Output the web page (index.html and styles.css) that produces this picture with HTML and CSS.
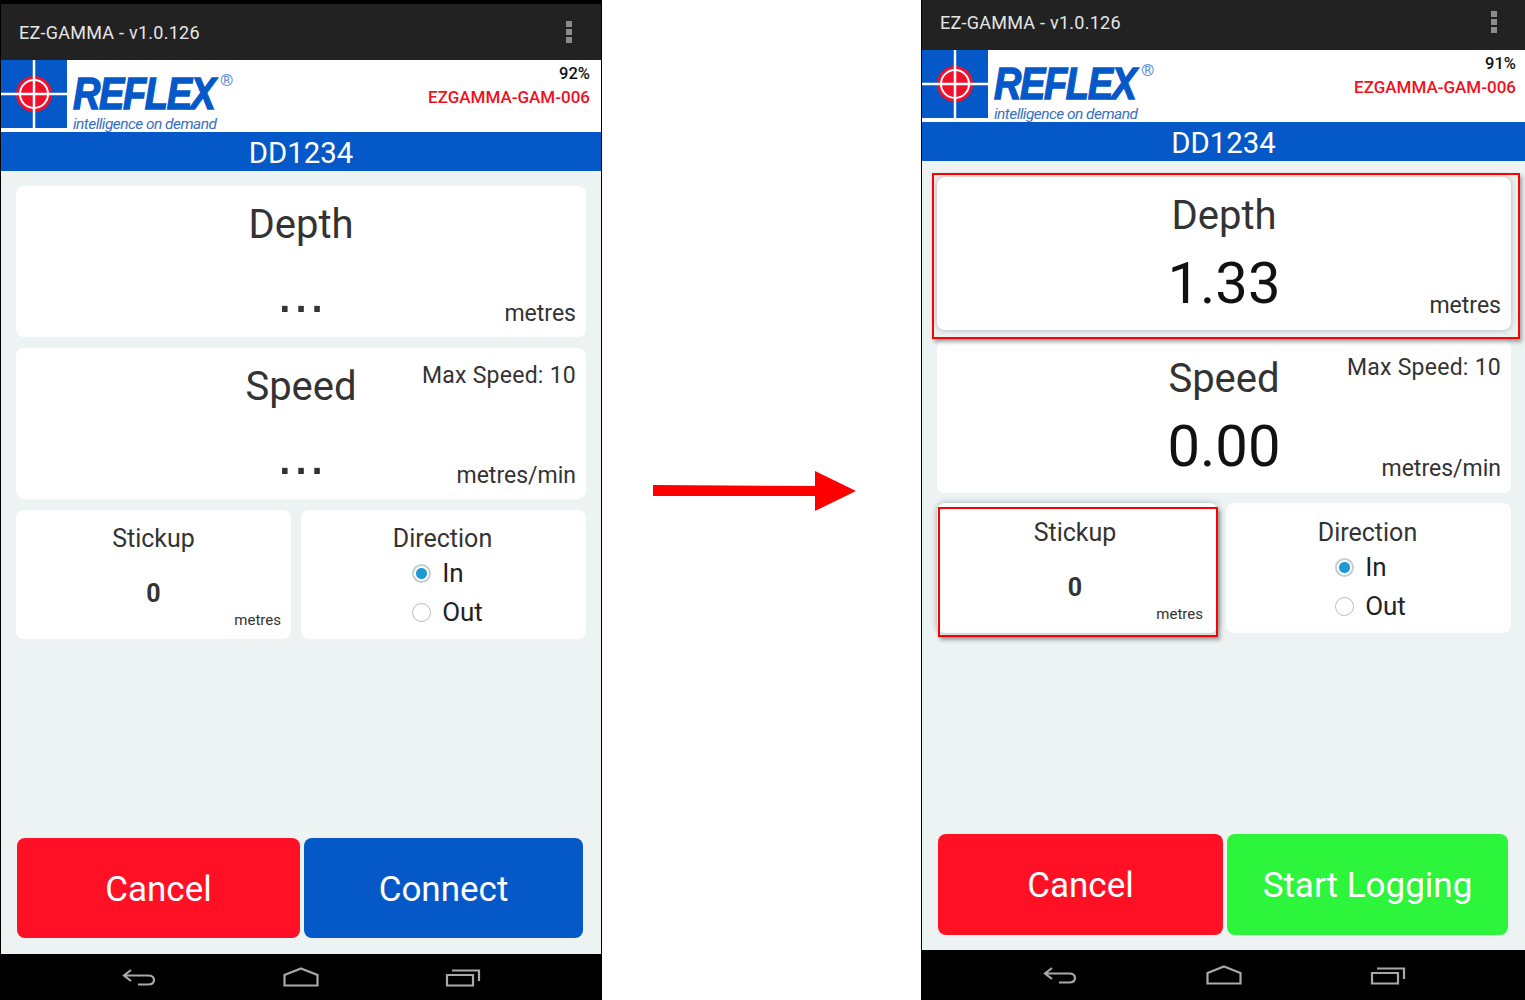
FILE: index.html
```html
<!DOCTYPE html>
<html lang="en">

<head>
    <meta charset="UTF-8">
    <meta name="viewport" content="width=device-width, initial-scale=1.0">
    <title>EZ-GAMMA connect and start logging</title>
    <link rel="stylesheet" href="styles.css">
</head>

<body>
    <!-- first screen: before connecting -->
    <div class="phone phone-before">
        <div class="action-bar">
            <span class="app-name">EZ-GAMMA - v1.0.126</span>
            <span class="menu-dots"><i></i><i></i><i></i></span>
        </div>
        <div class="brand-bar">
            <svg class="logo-mark" viewBox="0 0 66 68">
                <rect width="66" height="68" fill="#0558c8" />
                <circle cx="33" cy="34" r="18" fill="#f0102c" />
                <circle cx="33" cy="34" r="14" fill="none" stroke="#fff" stroke-width="2" />
                <path d="M33 0V68M0 34H66" stroke="#fff" stroke-width="2.5" />
            </svg>
            <div class="logo-text">
                <div class="logo-name"><span class="logo-word">REFLEX</span><sup>®</sup></div>
                <div class="logo-tag">intelligence on demand</div>
            </div>
            <div class="device-info">
                <div class="battery">92%</div>
                <div class="device-name">EZGAMMA-GAM-006</div>
            </div>
        </div>
        <div class="hole-bar">DD1234</div>
        <div class="content">
            <div class="card card-big">
                <div class="card-line">
                    <span class="big-label">Depth</span>
                </div>
                <div class="card-line value-line">
                    <span class="big-value waiting">...</span>
                    <span class="unit">metres</span>
                </div>
            </div>
            <div class="card card-big">
                <div class="card-line">
                    <span class="big-label">Speed</span>
                    <span class="max-speed">Max Speed: 10</span>
                </div>
                <div class="card-line value-line">
                    <span class="big-value waiting">...</span>
                    <span class="unit">metres/min</span>
                </div>
            </div>
            <div class="small-row">
                <div class="card card-small stickup">
                    <div class="small-label">Stickup</div>
                    <div class="small-value">0</div>
                    <div class="small-unit">metres</div>
                </div>
                <div class="card card-small direction">
                    <div class="small-label">Direction</div>
                    <div class="radio-group">
                        <div class="radio-item"><span class="radio radio-on"></span>In</div>
                        <div class="radio-item"><span class="radio"></span>Out</div>
                    </div>
                </div>
            </div>
            <div class="buttons">
                <div class="btn btn-cancel">Cancel</div>
                <div class="btn btn-connect">Connect</div>
            </div>
        </div>
        <div class="nav-bar">
            <svg class="nav-icon" viewBox="0 0 36 20"><path d="M10 3L3 8.500L10 14M3 8.500H27Q33 8.500 33 13Q33 17.500 27 17.500H17" /></svg>
            <svg class="nav-icon" viewBox="0 0 36 20"><path d="M18 1.500L34.500 8V18.500H1.500V8Z" /></svg>
            <svg class="nav-icon" viewBox="0 0 36 20"><path d="M2 8H28V18.500H2ZM7 3.500H34V14" /></svg>
        </div>
    </div>

    <div class="arrow-col">
        <svg class="arrow" viewBox="0 0 203 40">
            <path d="M0 14L162 15V0L203 20L162 40V25L0 25Z" fill="#fe0000" />
        </svg>
    </div>

    <!-- second screen: connected -->
    <div class="phone phone-after">
        <div class="action-bar">
            <span class="app-name">EZ-GAMMA - v1.0.126</span>
            <span class="menu-dots"><i></i><i></i><i></i></span>
        </div>
        <div class="brand-bar">
            <svg class="logo-mark" viewBox="0 0 66 68">
                <rect width="66" height="68" fill="#0558c8" />
                <circle cx="33" cy="34" r="18" fill="#f0102c" />
                <circle cx="33" cy="34" r="14" fill="none" stroke="#fff" stroke-width="2" />
                <path d="M33 0V68M0 34H66" stroke="#fff" stroke-width="2.5" />
            </svg>
            <div class="logo-text">
                <div class="logo-name"><span class="logo-word">REFLEX</span><sup>®</sup></div>
                <div class="logo-tag">intelligence on demand</div>
            </div>
            <div class="device-info">
                <div class="battery">91%</div>
                <div class="device-name">EZGAMMA-GAM-006</div>
            </div>
        </div>
        <div class="hole-bar">DD1234</div>
        <div class="content">
            <div class="card card-big marked marked-depth">
                <div class="card-line">
                    <span class="big-label">Depth</span>
                </div>
                <div class="card-line value-line">
                    <span class="big-value">1.33</span>
                    <span class="unit">metres</span>
                </div>
            </div>
            <div class="card card-big">
                <div class="card-line">
                    <span class="big-label">Speed</span>
                    <span class="max-speed">Max Speed: 10</span>
                </div>
                <div class="card-line value-line">
                    <span class="big-value">0.00</span>
                    <span class="unit">metres/min</span>
                </div>
            </div>
            <div class="small-row">
                <div class="card card-small stickup marked marked-stickup">
                    <div class="small-label">Stickup</div>
                    <div class="small-value">0</div>
                    <div class="small-unit">metres</div>
                </div>
                <div class="card card-small direction">
                    <div class="small-label">Direction</div>
                    <div class="radio-group">
                        <div class="radio-item"><span class="radio radio-on"></span>In</div>
                        <div class="radio-item"><span class="radio"></span>Out</div>
                    </div>
                </div>
            </div>
            <div class="buttons">
                <div class="btn btn-cancel">Cancel</div>
                <div class="btn btn-start">Start Logging</div>
            </div>
        </div>
        <div class="nav-bar">
            <svg class="nav-icon" viewBox="0 0 36 20"><path d="M10 3L3 8.500L10 14M3 8.500H27Q33 8.500 33 13Q33 17.500 27 17.500H17" /></svg>
            <svg class="nav-icon" viewBox="0 0 36 20"><path d="M18 1.500L34.500 8V18.500H1.500V8Z" /></svg>
            <svg class="nav-icon" viewBox="0 0 36 20"><path d="M2 8H28V18.500H2ZM7 3.500H34V14" /></svg>
        </div>
    </div>
</body>

</html>
```
FILE: styles.css
```css
* {
    box-sizing: border-box;
}

body {
    margin: 0;
    width: 1525px;
    height: 1000px;
    overflow: hidden;
    display: flex;
    background-color: #fff;
    font-family: Roboto, "Liberation Sans", sans-serif;
}

.phone {
    height: 1000px;
    display: flex;
    flex-direction: column;
    background-color: #000;
    border-left: 1px solid #000;
}

.phone-before {
    width: 602px;
    padding-top: 4px;
    border-right: 1px solid #000;
}

.phone-after {
    width: 604px;
}

.arrow-col {
    width: 319px;
    padding: 471px 0 0 51px;
}

.arrow {
    display: block;
    width: 203px;
    height: 40px;
}

/* top bars */
.action-bar {
    height: 56px;
    flex: none;
    display: flex;
    align-items: center;
    justify-content: space-between;
    padding: 0 29px 0 18px;
    background-color: #222;
    color: #e6e6e6;
}

.phone-after .action-bar {
    height: 50px;
    padding-right: 28px;
    padding-bottom: 6px;
}

.app-name {
    font-size: 18px;
    letter-spacing: 0.25px;
}

.menu-dots {
    display: flex;
    flex-direction: column;
    gap: 2px;
}

.menu-dots i {
    display: block;
    width: 6px;
    height: 6px;
    background-color: #8c8c8c;
}

.brand-bar {
    height: 72px;
    flex: none;
    display: flex;
    align-items: flex-start;
    background-color: #fff;
}

.logo-mark {
    width: 66px;
    height: 68px;
    flex: none;
}

.logo-text {
    margin-left: 6px;
    color: #0558c8;
}

.logo-name {
    position: relative;
    height: 38px;
    margin-top: 15px;
    font-family: "Liberation Sans", sans-serif;
    font-size: 44px;
    font-weight: 700;
    font-style: italic;
    line-height: 38px;
}

.logo-word {
    display: block;
    width: 146px;
    letter-spacing: -1.5px;
    -webkit-text-stroke: 1.4px #0558c8;
    transform: scaleX(0.86);
    transform-origin: left center;
}

.logo-name sup {
    position: absolute;
    top: -4px;
    left: 147px;
    font-family: Roboto, sans-serif;
    font-size: 17px;
    line-height: 18px;
    font-weight: 400;
    font-style: normal;
    color: #5c8fd8;
}

.logo-tag {
    margin-top: 3px;
    font-size: 15.500px;
    font-style: italic;
    line-height: 16px;
    letter-spacing: -0.55px;
    white-space: nowrap;
    color: #3a6fc0;
}

.device-info {
    margin-left: auto;
    padding: 5px 11px 0 0;
    text-align: right;
}

.phone-after .device-info {
    padding-right: 9px;
}

.battery {
    font-size: 16.500px;
    font-weight: 500;
    line-height: 18px;
    color: #111;
}

.device-name {
    margin-top: 4px;
    font-size: 17px;
    font-weight: 500;
    line-height: 20px;
    color: #f01020;
}

.hole-bar {
    height: 39px;
    flex: none;
    background-color: #0558c8;
    color: #fff;
    font-size: 29.300px;
    line-height: 42px;
    text-align: center;
}

/* main area */
.content {
    flex: 1;
    display: flex;
    flex-direction: column;
    padding: 15px 15px 16px;
    background-color: #edf2f3;
}

.phone-after .content {
    padding: 16px 14px 15px 15px;
}

.card {
    background-color: #fff;
    border-radius: 8px;
    color: #333;
}

.card-big {
    height: 151px;
    margin-bottom: 11px;
    padding: 14px 10px 0;
}

.phone-after .card-big {
    height: 153px;
    margin-bottom: 10px;
}

.card-line {
    display: grid;
    grid-template-columns: 1fr auto 1fr;
    align-items: start;
}

.big-label {
    grid-column: 2;
    font-size: 40px;
    line-height: 50px;
    color: #333;
}

.max-speed {
    grid-column: 3;
    justify-self: end;
    font-size: 23px;
    line-height: 28px;
    letter-spacing: 0.25px;
    white-space: nowrap;
}

.value-line {
    align-items: end;
    height: 76px;
    margin-top: 4px;
}

.big-value {
    grid-column: 2;
    font-size: 58px;
    line-height: 76px;
    color: #111;
}

.waiting {
    font-family: "Liberation Sans", sans-serif;
    color: #333;
}

.unit {
    grid-column: 3;
    justify-self: end;
    margin-bottom: 2px;
    font-size: 23px;
    line-height: 28px;
    white-space: nowrap;
}

.phone-after .unit {
    margin-bottom: 1px;
}

.small-row {
    display: flex;
    gap: 10px;
}

.phone-after .small-row {
    gap: 8px;
}

.card-small {
    height: 129px;
    padding-top: 13px;
    text-align: center;
}

.phone-after .card-small {
    height: 130px;
    padding-top: 14px;
}

.stickup {
    flex: 1;
}

.phone-after .stickup {
    padding-right: 5px;
}

.direction {
    width: 285px;
    flex: none;
}

.small-label {
    font-size: 25px;
    line-height: 32px;
}

.direction .small-label {
    margin-right: 2px;
}

.small-value {
    margin-top: 24px;
    font-size: 25px;
    font-weight: 700;
    line-height: 30px;
}

.small-unit {
    margin: 2px 10px 0 0;
    font-size: 15px;
    line-height: 18px;
    text-align: right;
}

.radio-group {
    display: inline-flex;
    flex-direction: column;
    margin: 2px 0 0 8px;
    gap: 7px;
}

.phone-after .radio-group {
    margin-left: 4px;
}

.radio-item {
    display: flex;
    align-items: center;
    gap: 11px;
    height: 32px;
    font-size: 26px;
    color: #222;
}

.radio {
    width: 19px;
    height: 19px;
    border: 1.500px solid #bbb;
    border-radius: 50%;
    background-color: #fff;
}

.radio-on {
    border: 2px solid #c3cdd3;
    background: radial-gradient(circle, #1d9ad6 0, #1d9ad6 5px, #fff 6px);
}

.buttons {
    display: grid;
    grid-template-columns: 283fr 279fr;
    gap: 4px;
    margin-top: auto;
    padding: 0 3px 0 1px;
}

.btn {
    height: 100px;
    border-radius: 8px;
    color: #fff;
    font-size: 35px;
    line-height: 104px;
    text-align: center;
}

.phone-after .btn {
    height: 101px;
}

.btn-cancel {
    background-color: #ff1024;
}

.btn-connect {
    background-color: #0558c8;
}

.btn-start {
    background-color: #2cf53c;
}

.nav-bar {
    height: 46px;
    flex: none;
    display: flex;
    align-items: center;
    justify-content: center;
    gap: 126px;
    background-color: #000;
}

.phone-after .nav-bar {
    height: 50px;
    gap: 128px;
}

.nav-icon {
    width: 36px;
    height: 20px;
    fill: none;
    stroke: #a9a9a9;
    stroke-width: 2.200;
}

/* red call-out boxes lying over the cards */
.marked {
    position: relative;
    box-shadow: 0 0 6px rgba(70, 80, 80, 0.4);
}

.marked::after {
    content: "";
    position: absolute;
    border: 2px solid #f00;
    box-shadow: 2px 3px 4px rgba(60, 60, 60, 0.45);
}

.marked-depth::after {
    top: -4px;
    left: -5px;
    right: -9px;
    bottom: -9px;
}

.marked-stickup::after {
    top: 4px;
    left: 1px;
    right: 0;
    bottom: -4px;
}
```
